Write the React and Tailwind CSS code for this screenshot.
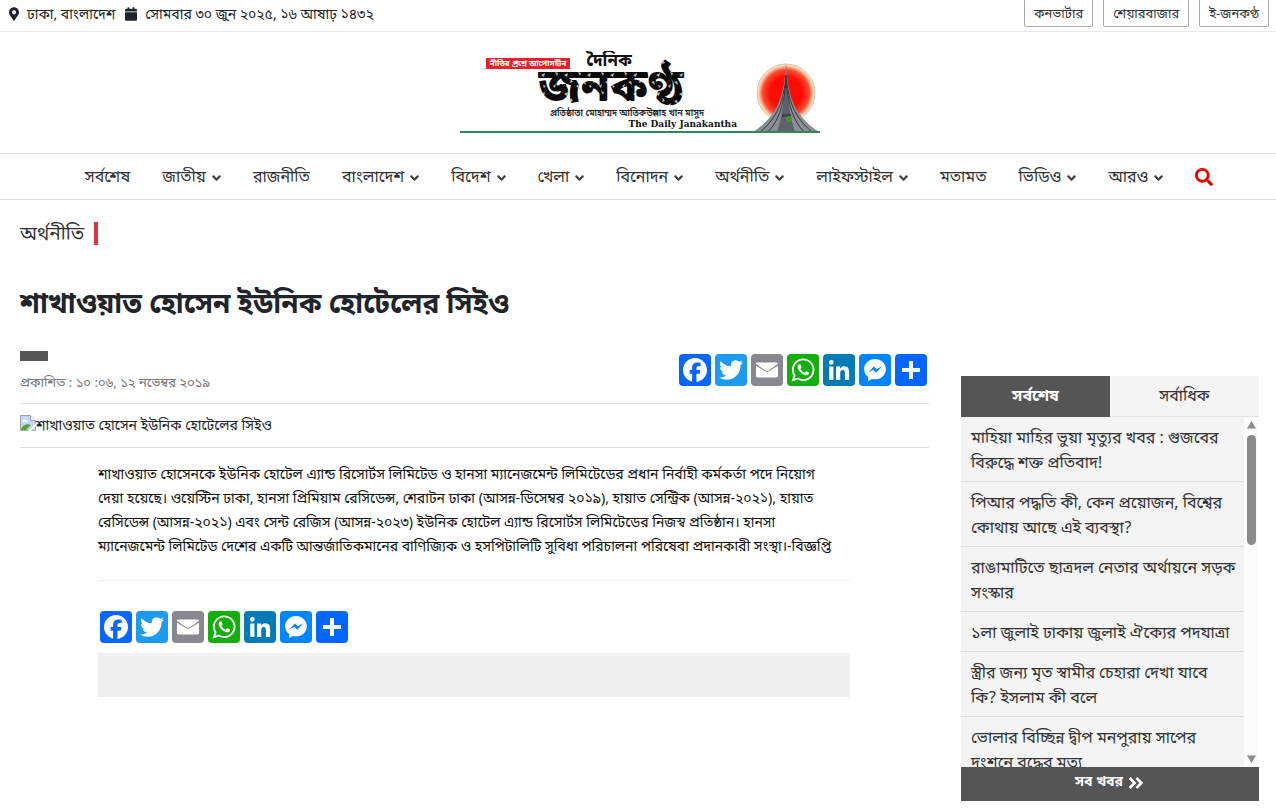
// src/App.jsx
import { useState } from "react";
import {
  FaAngleDoubleRight,
  FaAngleDown,
  FaCalendar,
  FaMapMarkerAlt,
  FaSearch,
} from "react-icons/fa";

const topLinks = ["কনভার্টার", "শেয়ারবাজার", "ই-জনকণ্ঠ"];

const navItems = [
  { label: "সর্বশেষ" },
  { label: "জাতীয়", menu: true },
  { label: "রাজনীতি" },
  { label: "বাংলাদেশ", menu: true },
  { label: "বিদেশ", menu: true },
  { label: "খেলা", menu: true },
  { label: "বিনোদন", menu: true },
  { label: "অর্থনীতি", menu: true },
  { label: "লাইফস্টাইল", menu: true },
  { label: "মতামত" },
  { label: "ভিডিও", menu: true },
  { label: "আরও", menu: true },
];

const latest = [
  "মাহিয়া মাহির ভুয়া মৃত্যুর খবর : গুজবের বিরুদ্ধে শক্ত প্রতিবাদ!",
  "পিআর পদ্ধতি কী, কেন প্রয়োজন, বিশ্বের কোথায় আছে এই ব্যবস্থা?",
  "রাঙামাটিতে ছাত্রদল নেতার অর্থায়নে সড়ক সংস্কার",
  "১লা জুলাই ঢাকায় জুলাই ঐক্যের পদযাত্রা",
  "স্ত্রীর জন্য মৃত স্বামীর চেহারা দেখা যাবে কি?\u00a0ইসলাম কী বলে",
  "ভোলার বিচ্ছিন্ন দ্বীপ মনপুরায় সাপের দংশনে বৃদ্ধের মৃত্যু",
];

const shares = [
  {
    name: "Facebook",
    bg: "bg-[#0866ff]",
    d: "M28 16c0-6.627-5.373-12-12-12S4 9.373 4 16c0 5.628 3.875 10.35 9.101 11.647v-7.98h-2.474V16H13.1v-1.58c0-4.085 1.849-5.978 5.859-5.978.76 0 2.072.15 2.608.298v3.325c-.283-.03-.775-.045-1.386-.045-1.967 0-2.728.745-2.728 2.683V16h3.92l-.673 3.667h-3.247v8.245C23.395 27.195 28 22.135 28 16",
  },
  {
    name: "Twitter",
    bg: "bg-[#1d9bf0]",
    d: "M28 8.557a10 10 0 0 1-2.828.775 4.93 4.93 0 0 0 2.166-2.725 9.7 9.7 0 0 1-3.13 1.194 4.92 4.92 0 0 0-3.593-1.55 4.924 4.924 0 0 0-4.794 6.049c-4.09-.21-7.72-2.17-10.15-5.15a4.94 4.94 0 0 0-.665 2.477c0 1.71.87 3.214 2.19 4.1a5 5 0 0 1-2.23-.616v.06c0 2.39 1.7 4.38 3.952 4.83-.414.115-.85.174-1.297.174q-.476-.001-.928-.086a4.935 4.935 0 0 0 4.6 3.42 9.9 9.9 0 0 1-6.114 2.107q-.597 0-1.175-.068a13.95 13.95 0 0 0 7.55 2.213c9.056 0 14.01-7.507 14.01-14.013q0-.32-.015-.637c.96-.695 1.795-1.56 2.455-2.55z",
  },
  {
    name: "Email",
    bg: "bg-[#888990]",
    d: "M27 21.775v-9.983s-9.975 6.022-11 6.422c-1.010-.391-11-6.422-11-6.422v9.983c0 1.387.29 1.664 1.65 1.664h18.7c1.39 0 1.65-.24 1.65-1.664m-.013-11.9c0-1.01-.293-1.313-1.637-1.313H6.65c-1.385 0-1.65.34-1.65 1.35l.014.16s9.875 6.798 10.986 7.19c1.174-.455 10.986-7.27 10.986-7.27z",
  },
  {
    name: "WhatsApp",
    bg: "bg-[#12af0a]",
    d: "M16.21 4.41C9.973 4.41 4.917 9.465 4.917 15.7c0 2.134.592 4.13 1.62 5.832L4.5 27.59l6.25-2.002a11.24 11.24 0 0 0 5.46 1.404c6.234 0 11.29-5.055 11.29-11.29 0-6.237-5.056-11.292-11.29-11.292m0 20.69c-1.91 0-3.69-.57-5.173-1.553l-3.61 1.156 1.173-3.49a9.35 9.35 0 0 1-1.79-5.512c0-5.18 4.217-9.4 9.4-9.4s9.397 4.22 9.397 9.4c0 5.188-4.214 9.4-9.398 9.4zm5.293-6.832c-.284-.155-1.673-.906-1.934-1.012-.265-.106-.455-.16-.658.12s-.78.91-.954 1.096c-.176.186-.345.203-.628.048-.282-.154-1.2-.494-2.264-1.517-.83-.795-1.373-1.76-1.53-2.055s0-.445.15-.584c.134-.124.3-.326.45-.488.15-.163.203-.28.306-.47.104-.19.06-.36-.005-.506-.066-.147-.59-1.587-.81-2.173-.218-.586-.46-.498-.63-.505-.168-.007-.358-.038-.55-.045-.19-.007-.51.054-.78.332-.277.274-1.05.943-1.1 2.362-.055 1.418.926 2.826 1.064 3.023.137.2 1.874 3.272 4.76 4.537 2.888 1.264 2.9.878 3.43.85.53-.027 1.734-.633 2-1.297s.287-1.24.22-1.363c-.07-.123-.26-.203-.54-.357z",
  },
  {
    name: "LinkedIn",
    bg: "bg-[#007bb5]",
    d: "M6.227 12.61h4.19v13.48h-4.19zm2.095-6.7a2.43 2.43 0 0 1 0 4.86c-1.344 0-2.428-1.09-2.428-2.43s1.084-2.43 2.428-2.43m4.72 6.7h4.02v1.84h.058c.56-1.058 1.927-2.176 3.965-2.176 4.238 0 5.02 2.792 5.02 6.42v7.395h-4.183v-6.56c0-1.564-.03-3.574-2.178-3.574-2.18 0-2.514 1.7-2.514 3.46v6.668h-4.187z",
  },
  {
    name: "Messenger",
    bg: "bg-[#0084ff]",
    d: "M16 5C9.986 5 5.11 9.56 5.11 15.182c0 3.2 1.58 6.054 4.046 7.92V27l3.716-2.06c.99.276 2.04.425 3.128.425 6.014 0 10.89-4.56 10.89-10.183S22.013 5 16 5m1.147 13.655L14.33 15.73l-5.423 3 5.946-6.31 2.816 2.925 5.42-3z",
  },
  {
    name: "Share",
    bg: "bg-[#0166ff]",
    d: "M14 7h4v7h7v4h-7v7h-4v-7H7v-4h7z",
  },
];

function Logo() {
  return (
    <svg
      viewBox="0 0 360 84"
      className="w-[360px] font-['Noto_Sans_Bengali','Noto_Sans',sans-serif]"
      role="img"
      aria-label="দৈনিক জনকণ্ঠ"
    >
      <defs>
        <radialGradient id="sun">
          <stop offset="0.55" stopColor="#ff0a00" />
          <stop offset="0.8" stopColor="#fb4a30" />
          <stop offset="0.93" stopColor="#fbc9a8" />
          <stop offset="1" stopColor="#fdf6dc" />
        </radialGradient>
        <pattern id="marble" width="23" height="19" patternUnits="userSpaceOnUse">
          <rect width="23" height="19" fill="#0a0a0a" />
          <path
            d="M3 2l3 1-1 3zM12 5l4-2-1 4zM19 9l2 3-3 1zM7 12l3-1 1 4zM14 15l3 1-2 2zM1 16l3-2-1 4z"
            fill="#b5b5b5"
          />
        </pattern>
      </defs>

      <rect x="26" y="7" width="84" height="11" fill="#e8202a" />
      <text x="68" y="15" fontSize="8" fontWeight="700" fill="#fff" textAnchor="middle">
        নীতির প্রশ্নে আপোসহীন
      </text>
      <text x="149" y="15" fontSize="17" fontWeight="700" fill="#111" textAnchor="middle">
        দৈনিক
      </text>
      <text
        x="151"
        y="50"
        fontSize="46"
        fontWeight="900"
        fill="url(#marble)"
        textAnchor="middle"
      >
        জনকণ্ঠ
      </text>
      <text x="167" y="65" fontSize="9" fontWeight="600" fill="#222" textAnchor="middle">
        প্রতিষ্ঠাতা মোহাম্মদ আতিকউল্লাহ খান মাসুদ
      </text>
      <text
        x="277"
        y="76"
        fontSize="9"
        fontWeight="700"
        fill="#111"
        textAnchor="end"
        className="font-['DejaVu_Serif',serif]"
      >
        The Daily Janakantha
      </text>

      <circle cx="326" cy="42" r="29" fill="url(#sun)" stroke="#9a9a72" strokeWidth="0.5" />
      <path d="M326 13c2 30 6 50 33 68h-66c27-18 31-38 33-68z" fill="#8a8f95" />
      <path d="M326 13c1 30 3 50 9 68h-18c6-18 8-38 9-68z" fill="#5d6268" />
      <path
        d="M326 24c-2 26-9 43-26 57M326 30c-2 24-7 39-18 51M326 30c2 24 7 39 18 51M326 24c2 26 9 43 26 57"
        fill="none"
        stroke="#34383d"
      />
      <path d="M322 63h9v3h-9z" fill="#3e4449" />
      <circle cx="329" cy="68" r="3" fill="#3f9c35" />
      <circle cx="329" cy="68" r="1" fill="#e8202a" />
      <rect y="80" width="360" height="2" fill="#2e8b57" />
    </svg>
  );
}

function ShareButtons() {
  return (
    <div className="flex gap-1">
      {shares.map((s) => (
        <a key={s.name} href="#" aria-label={s.name} className={`size-8 rounded-sm ${s.bg}`}>
          <svg viewBox="0 0 32 32" className="size-8" fill="#fff" aria-hidden="true">
            <path d={s.d} fillRule="evenodd" />
          </svg>
        </a>
      ))}
    </div>
  );
}

function MissingPhoto({ alt }) {
  return (
    <div className="flex items-start text-sm leading-6">
      <svg viewBox="0 0 16 16" className="size-4 shrink-0" aria-hidden="true">
        <path d="M.5.5h10l5 5v10H.5z" fill="#c3d6f7" stroke="#a3a3a3" />
        <path d="M10.500.5v5h5" fill="#fff" stroke="#a3a3a3" />
        <path d="M2.500 6.500a2 2 0 0 1 3.500-1.500 1.500 1.500 0 0 1 1.500 2h-5z" fill="#fff" />
        <path d="M1 15c1-5 6-7 10-5l-5 5z" fill="#55a630" />
        <path d="M8 16l8-8v3l-5 5z" fill="#fff" />
      </svg>
      {alt}
    </div>
  );
}

function Sidebar() {
  const [tab, setTab] = useState("latest");
  const tabClass = (name) =>
    tab === name
      ? "bg-[#555] text-white font-bold border-[#555]"
      : "bg-[#f4f4f4] text-[#333] border-[#dee2e6]";

  return (
    <aside className="w-[298px] shrink-0 mt-[84px]">
      <div className="grid grid-cols-2 h-[41px] text-base" role="tablist">
        <button
          role="tab"
          aria-selected={tab === "latest"}
          onClick={() => setTab("latest")}
          className={`border-b pt-[2px] ${tabClass("latest")}`}
        >
          সর্বশেষ
        </button>
        <button
          role="tab"
          aria-selected={tab === "popular"}
          onClick={() => setTab("popular")}
          className={`border-b pt-[2px] ${tabClass("popular")}`}
        >
          সর্বাধিক
        </button>
      </div>

      <div className="flex h-[350px]">
        <ul className="flex-1 min-w-0 overflow-hidden bg-[#f4f4f4]">
          {latest.map((title) => (
            <li key={title} className="border-b border-[#dedede] pl-[10px] pr-1 pt-[10px] pb-1">
              <a href="#" className="block text-base leading-[25px] text-[#333]">
                {title}
              </a>
            </li>
          ))}
        </ul>
        <div className="w-[15px] flex flex-col items-center bg-[#fcfcfc] py-1" aria-hidden="true">
          <svg viewBox="0 0 9 8" className="w-[9px] h-2" fill="#8b8b8b">
            <path d="M4.500 0L9 7.500H0z" />
          </svg>
          <div className="mt-[6px] w-[9px] h-[110px] rounded-full bg-[#8b8b8b]" />
          <svg viewBox="0 0 9 8" className="mt-auto w-[9px] h-2" fill="#8b8b8b">
            <path d="M4.500 8L9 .500H0z" />
          </svg>
        </div>
      </div>

      <a
        href="#"
        className="flex h-[34px] items-center justify-center gap-1 bg-[#555] pb-[2px] text-sm font-bold text-white"
      >
        সব খবর <FaAngleDoubleRight className="text-lg" />
      </a>
    </aside>
  );
}

export default function App() {
  return (
    <div className="min-h-screen bg-white text-[#212529] font-['Noto_Sans_Bengali','Noto_Sans',sans-serif]">
      {/* TOP BAR */}
      <div className="flex h-8 items-start justify-between border-b border-[#e9e9e9] pl-[9px] pr-[7px]">
        <div className="flex h-7 items-center text-sm">
          <FaMapMarkerAlt className="mr-2 w-[10px] text-sm" />
          <span className="pt-1">ঢাকা, বাংলাদেশ</span>
          <FaCalendar className="ml-[10px] mr-2 w-3 text-sm" />
          <span className="pt-1">সোমবার ৩০ জুন ২০২৫, ১৬ আষাঢ় ১৪৩২</span>
        </div>
        <div className="flex gap-[10px]">
          {topLinks.map((label) => (
            <a
              key={label}
              href="#"
              className="flex h-[27px] items-center rounded-b-xs border border-t-0 border-[#aaa] px-[9px] pt-1 text-[13px] text-[#333]"
            >
              {label}
            </a>
          ))}
        </div>
      </div>

      {/* LOGO */}
      <header className="flex h-[121px] items-center justify-center pl-1">
        <a href="#">
          <Logo />
        </a>
      </header>

      {/* MENU */}
      <nav className="flex h-[47px] items-center justify-center gap-8 border-y border-[#dedede] pl-[22px]">
        {navItems.map((item) => (
          <a
            key={item.label}
            href="#"
            className="flex items-center gap-[6px] whitespace-nowrap pt-[2px] text-base text-[#333]"
          >
            {item.label}
            {item.menu && <FaAngleDown className="h-[14px] w-[9px] text-[#444]" />}
          </a>
        ))}
        <button aria-label="Search" className="text-lg text-[#e60000]">
          <FaSearch />
        </button>
      </nav>

      <div className="pl-5 pr-[17px]">
        <div className="flex pt-[22px]">
          <a
            href="#"
            className="border-r-4 border-[#dc3545] pr-[10px] pt-[5px] text-[19px] leading-[18px] text-[#333]"
          >
            অর্থনীতি
          </a>
        </div>

        <div className="flex gap-8 pt-[47px]">
          <main className="min-w-0 flex-1">
            <h1 className="h-[51px] text-[28px] leading-7 font-bold">
              শাখাওয়াত হোসেন ইউনিক হোটেলের সিইও
            </h1>

            <div className="flex items-start justify-between border-b border-[#dedede] pb-[9px] pr-[2px]">
              <div className="pt-2">
                <div className="h-[10px] w-7 bg-[#555]" />
                <p className="mt-[13px] text-[13px] leading-5 text-[#777]">
                  প্রকাশিত : ১০ :০৬, ১২ নভেম্বর ২০১৯
                </p>
              </div>
              <div className="pt-[11px]">
                <ShareButtons />
              </div>
            </div>

            <div className="border-b border-[#dedede] pb-2 pt-[11px]">
              <MissingPhoto alt="শাখাওয়াত হোসেন ইউনিক হোটেলের সিইও" />
            </div>

            <article className="ml-[78px] mr-[79px] pt-4">
              <p className="border-b border-[#eee] pb-5 text-sm leading-6 text-[#111]">
                শাখাওয়াত হোসেনকে ইউনিক হোটেল এ্যান্ড রিসোর্টস লিমিটেড ও হানসা ম্যানেজমেন্ট লিমিটেডের
                প্রধান নির্বাহী কর্মকর্তা পদে নিয়োগ
                <br />
                দেয়া হয়েছে। ওয়েস্টিন ঢাকা, হানসা প্রিমিয়াম রেসিডেন্স, শেরাটন ঢাকা (আসন্ন-ডিসেম্বর
                ২০১৯), হায়াত সেন্ট্রিক (আসন্ন-২০২১), হায়াত
                <br />
                রেসিডেন্স (আসন্ন-২০২১) এবং সেন্ট রেজিস (আসন্ন-২০২৩) ইউনিক হোটেল এ্যান্ড রিসোর্টস
                লিমিটেডের নিজস্ব প্রতিষ্ঠান। হানসা
                <br />
                ম্যানেজমেন্ট লিমিটেড দেশের একটি আন্তর্জাতিকমানের বাণিজ্যিক ও হসপিটালিটি সুবিধা
                পরিচালনা পরিষেবা প্রদানকারী সংস্থা।-বিজ্ঞপ্তি
              </p>
              <div className="mt-[30px] pl-[2px]">
                <ShareButtons />
              </div>
              <div className="mt-[10px] h-11 bg-[#f0f0f0]" />
            </article>
          </main>

          <Sidebar />
        </div>
      </div>
    </div>
  );
}
